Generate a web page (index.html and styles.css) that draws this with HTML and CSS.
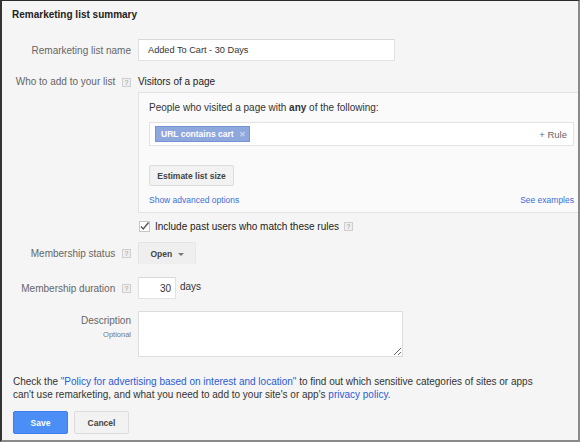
FILE: index.html
```html
<!DOCTYPE html>
<html lang="en">
<head>
  <meta charset="UTF-8" />
  <title>Remarketing list summary</title>
  <link rel="stylesheet" href="styles.css">
</head>
<body>
  <div class="frame">
    <h1 class="title">Remarketing list summary</h1>

    <div class="row row-name">
      <div class="label">Remarketing list name</div>
      <input type="text" class="text-input name-input" value="Added To Cart - 30 Days" />
    </div>

    <div class="row row-who">
      <div class="label">Who to add to your list <span class="help">?</span></div>
      <div class="value">Visitors of a page</div>
    </div>

    <div class="rules-box">
      <div class="rules-intro">People who visited a page with <b>any</b> of the following:</div>
      <div class="rule-input">
        <span class="chip">URL contains cart <span class="chip-x">&#x2715;</span></span>
        <span class="add-rule">+ Rule</span>
      </div>
      <button class="btn estimate">Estimate list size</button>
      <div class="box-links">
        <a href="#">Show advanced options</a>
        <a href="#">See examples</a>
      </div>
    </div>

    <div class="check-row">
      <span class="checkbox">
        <svg width="11" height="11" viewBox="0 0 11 11"><path d="M2 5.5 L4.3 8 L9.5 1.5" fill="none" stroke="#555" stroke-width="1.4"/></svg>
      </span>
      <span>Include past users who match these rules</span>
      <span class="help">?</span>
    </div>

    <div class="row row-status">
      <div class="label">Membership status <span class="help">?</span></div>
      <button class="btn open-btn">Open <span class="caret"></span></button>
    </div>

    <div class="row row-duration">
      <div class="label">Membership duration <span class="help">?</span></div>
      <input type="text" class="text-input days-input" value="30" />
      <span class="days">days</span>
    </div>

    <div class="row row-desc">
      <div class="label">Description<div class="optional">Optional</div></div>
      <textarea class="desc"></textarea>
    </div>

    <p class="policy">Check the <a href="#">"Policy for advertising based on interest and location"</a> to find out which sensitive categories of sites or apps can't use remarketing, and what you need to add to your site's or app's <a href="#">privacy policy.</a></p>

    <div class="actions">
      <button class="btn save">Save</button>
      <button class="btn cancel">Cancel</button>
    </div>
  </div>
</body>
</html>
```

FILE: styles.css
```css
body {
  margin: 0;
  font-family: "Liberation Sans", Arial, sans-serif;
  color: #222;
}

.frame {
  box-sizing: border-box;
  width: 580px;
  height: 442px;
  background: #f5f5f5;
  border-top: 1px solid #2b2b2b;
  border-left: 2px solid #333;
  border-right: 2px solid #8a8a8a;
  border-bottom: 2px solid #8a8a8a;
  padding-left: 10px;
  overflow: hidden;
}

.title {
  font-size: 10px;
  font-weight: bold;
  margin: 0;
  padding-top: 7px;
  line-height: 14px;
  color: #222;
}

.row {
  display: flex;
  align-items: center;
}

.label {
  box-sizing: border-box;
  width: 129px;
  margin-left: -10px;
  margin-right: 7px;
  text-align: right;
  font-size: 10px;
  color: #666;
  flex-shrink: 0;
}

.help {
  display: inline-block;
  box-sizing: border-box;
  width: 9px;
  height: 9px;
  border: 1px solid #cfcfcf;
  background: #efefef;
  color: #999;
  font-size: 7px;
  line-height: 7px;
  text-align: center;
  vertical-align: middle;
  margin-left: 4px;
}

.text-input {
  box-sizing: border-box;
  border: 1px solid #e2e2e2;
  border-top-color: #d8d8d8;
  background: #fff;
  font-family: inherit;
  font-size: 9.2px;
  color: #333;
  outline: none;
}

.row-name {
  margin-top: 17px;
}

.name-input {
  width: 257px;
  height: 22px;
  padding: 0 9px;
}

.row-who {
  margin-top: 15px;
}

.value {
  font-size: 10px;
  color: #222;
}

.rules-box {
  box-sizing: border-box;
  margin: 5px 0 0 126px;
  height: 121px;
  background: #fafafa;
  border: 1px solid #e3e3e3;
  border-right: none;
  padding: 8px 4px 0 10px;
}

.rules-intro {
  font-size: 10px;
  color: #333;
  line-height: 13px;
}

.rule-input {
  box-sizing: border-box;
  display: flex;
  justify-content: space-between;
  align-items: center;
  height: 24px;
  margin-top: 8px;
  background: #fff;
  border: 1px solid #e3e3e3;
  padding: 0 6px 0 5px;
}

.chip {
  box-sizing: border-box;
  width: 95px;
  height: 16px;
  line-height: 14px;
  padding: 0 0 0 5px;
  background: #8ea7dc;
  border: 1px solid #7693d4;
  color: #fff;
  font-size: 8.5px;
  font-weight: bold;
}

.chip-x {
  color: #c8d3ef;
  font-size: 8px;
  margin-left: 3px;
}

.add-rule {
  font-size: 9.5px;
  color: #666;
}

.btn {
  box-sizing: border-box;
  font-family: inherit;
  font-size: 8.5px;
  font-weight: bold;
  color: #444;
  background: #f2f2f2;
  border: 1px solid #dcdcdc;
  border-radius: 2px;
  cursor: pointer;
  padding: 0;
}

.estimate {
  display: block;
  width: 85px;
  height: 21px;
  margin-top: 19px;
}

.box-links {
  display: flex;
  justify-content: space-between;
  margin-top: 9px;
  font-size: 8.5px;
}

.box-links a {
  color: #3b6fd6;
  text-decoration: none;
}

.check-row {
  display: flex;
  align-items: center;
  margin: 8px 0 0 127px;
  font-size: 10px;
  color: #222;
}

.checkbox {
  box-sizing: border-box;
  display: inline-block;
  width: 11px;
  height: 11px;
  border: 1px solid #c6c6c6;
  background: #fff;
  margin-right: 5px;
  line-height: 0;
}

.checkbox svg {
  margin: -1px 0 0 -1px;
}

.check-row .help {
  margin-left: 5px;
}

.row-status {
  margin-top: 10px;
}

.open-btn {
  width: 58px;
  height: 22px;
  border-color: #e4e4e4;
  border-bottom: none;
  border-right-color: #e8e8e8;
  background: #efefef;
}

.caret {
  display: inline-block;
  width: 0;
  height: 0;
  border-left: 3px solid transparent;
  border-right: 3px solid transparent;
  border-top: 3px solid #777;
  vertical-align: middle;
  margin-left: 3px;
}

.row-duration {
  margin-top: 13px;
}

.days-input {
  width: 38px;
  height: 22px;
  text-align: right;
  padding: 0 4px;
  font-size: 10px;
}

.days {
  font-size: 10px;
  color: #333;
  margin-left: 4px;
  margin-top: -3px;
}

.row-desc {
  margin-top: 12px;
  align-items: flex-start;
}

.row-desc .label {
  margin-top: 4px;
  line-height: 12px;
}

.optional {
  font-size: 7.5px;
  margin-top: 2px;
  color: #777;
}

.desc {
  box-sizing: border-box;
  width: 265px;
  height: 46px;
  border: 1px solid #dcdcdc;
  background: #fff;
  margin: 0;
  resize: vertical;
}

.policy {
  width: 526px;
  margin: 18px 0 0 1px;
  font-size: 10px;
  line-height: 13px;
  color: #333;
}

.policy a {
  color: #2a5bd7;
  text-decoration: none;
}

.actions {
  display: flex;
  gap: 6px;
  margin: 10px 0 0 1px;
}

.save {
  width: 55px;
  height: 23px;
  background: #4b8ef6;
  border-color: #3d7eea;
  color: #fff;
}

.cancel {
  width: 55px;
  height: 23px;
}
```
